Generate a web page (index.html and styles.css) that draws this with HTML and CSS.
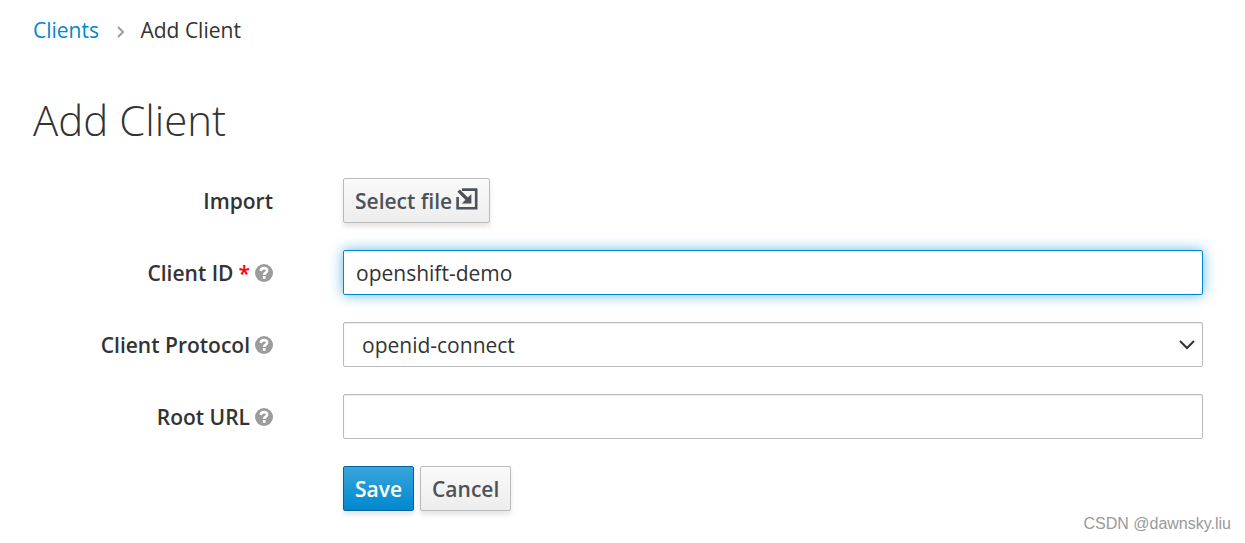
FILE: index.html
```html
<!DOCTYPE html>
<html lang="en">
<head>
    <meta charset="UTF-8">
    <meta name="viewport" content="width=device-width, initial-scale=1.0">
    <title>Add Client</title>
    <link rel="stylesheet" href="styles.css">
</head>
<body>
    <svg class="sprite" aria-hidden="true">
        <symbol id="help" viewBox="0 0 18 18">
            <circle cx="9" cy="9" r="9" fill="#9c9c9c"/>
            <path d="M5.7 7C6.2 3 12.2 3.4 12.2 6.5C12.2 8.6 9.2 8.6 9.2 10.9" fill="none" stroke="#fff" stroke-width="2.6"/>
            <path d="M7.9 12.1h2.7v2.7H7.9z" fill="#fff"/>
        </symbol>
    </svg>

    <main>
        <nav aria-label="Breadcrumb">
            <ol class="breadcrumb">
                <li><a href="#">Clients</a></li>
                <li>
                    <svg class="separator" viewBox="0 0 8 12" aria-hidden="true"><path d="M1 1l5 5-5 5"/></svg>
                    Add Client
                </li>
            </ol>
        </nav>

        <h1>Add Client</h1>

        <form class="client-form">
            <div class="form-group">
                <label for="import-button">Import</label>
                <button type="button" id="import-button" class="btn btn-default">
                    Select file
                    <svg class="import-icon" viewBox="0 0 22 22" aria-hidden="true">
                        <path d="M6 1.6H20.2V20.2H1.6V9" fill="none" stroke="#4d5258" stroke-width="2.6"/>
                        <path d="M2.6 2.6L12 12" fill="none" stroke="#4d5258" stroke-width="3.4"/>
                        <path d="M15.4 6v9.6H5.8z" fill="#4d5258"/>
                    </svg>
                </button>
            </div>

            <div class="form-group">
                <label for="clientId">Client ID <span class="required">*</span><svg class="help" aria-hidden="true"><use href="#help"/></svg></label>
                <input type="text" id="clientId" class="form-control active" value="openshift-demo">
            </div>

            <div class="form-group">
                <label for="protocol">Client Protocol<svg class="help" aria-hidden="true"><use href="#help"/></svg></label>
                <div class="select-wrap">
                    <select id="protocol" class="form-control">
                        <option selected>openid-connect</option>
                        <option>saml</option>
                    </select>
                    <svg class="arrow" viewBox="0 0 16 10" aria-hidden="true"><path d="M1 1l7 7 7-7"/></svg>
                </div>
            </div>

            <div class="form-group">
                <label for="rootUrl">Root URL<svg class="help" aria-hidden="true"><use href="#help"/></svg></label>
                <input type="text" id="rootUrl" class="form-control">
            </div>

            <div class="form-group">
                <div class="actions">
                    <button type="submit" class="btn btn-primary">Save</button>
                    <button type="button" class="btn btn-default">Cancel</button>
                </div>
            </div>
        </form>
    </main>

    <p class="watermark">CSDN @dawnsky.liu</p>
</body>
</html>
```

FILE: styles.css
```css
* {
    box-sizing: border-box;
}

body {
    margin: 0;
    min-height: 100vh;
    position: relative;
    background-color: #fff;
    color: #333;
    font-family: "Open Sans", "Noto Sans", sans-serif;
    font-size: 21px;
    line-height: 36px;
}

main {
    padding: 12px 42px 32px 33px;
}

.sprite {
    display: none;
}

.breadcrumb {
    display: flex;
    gap: 18px;
    margin: 0;
    padding: 0;
    list-style: none;
}

.breadcrumb a {
    color: #0088ce;
    text-decoration: none;
}

.separator {
    width: 8px;
    height: 12px;
    margin-right: 10px;
    fill: none;
    stroke: #9c9c9c;
    stroke-width: 2;
}

h1 {
    margin: 48px 0 34px;
    font-size: 42px;
    font-weight: 300;
    line-height: 48px;
}

.client-form {
    display: grid;
    gap: 27px;
}

.form-group {
    display: grid;
    grid-template-columns: 240px 1fr;
    column-gap: 70px;
    align-items: center;
}

.form-group label {
    display: flex;
    justify-content: flex-end;
    align-items: center;
    gap: 5px;
    font-weight: 600;
}

.required {
    color: #f00;
}

.help {
    width: 18px;
    height: 18px;
}

.form-control {
    width: 100%;
    height: 45px;
    padding: 0 12px;
    border: 1px solid #bbb;
    border-radius: 2px;
    background-color: #fff;
    box-shadow: inset 0 1px 1px rgba(3, 3, 3, 0.08);
    color: #333;
    font: inherit;
}

.form-control.active,
.form-control:focus {
    border-color: #0088ce;
    outline: 0;
    box-shadow: inset 0 1px 1px rgba(3, 3, 3, 0.08), 0 0 14px rgba(0, 136, 206, 0.6);
}

.select-wrap {
    display: flex;
    position: relative;
}

select.form-control {
    padding: 0 18px;
    appearance: none;
}

.arrow {
    position: absolute;
    top: 18px;
    right: 8px;
    width: 16px;
    height: 10px;
    fill: none;
    stroke: #333;
    stroke-width: 2;
    pointer-events: none;
}

.btn {
    display: flex;
    align-items: center;
    justify-self: start;
    gap: 4px;
    height: 45px;
    padding: 0 11px;
    border: 1px solid #bbb;
    border-radius: 2px;
    box-shadow: 0 4px 5px rgba(3, 3, 3, 0.1);
    font: inherit;
    font-weight: 600;
    cursor: pointer;
}

.btn-default {
    background-image: linear-gradient(#fafafa, #ededed);
    color: #4d5258;
}

.btn-primary {
    border-color: #00659c;
    background-image: linear-gradient(#39a5dc, #0088ce);
    color: #fff;
}

.import-icon {
    width: 22px;
    height: 22px;
    margin-bottom: 4px;
}

.actions {
    display: flex;
    gap: 6px;
    grid-column: 2;
}

.watermark {
    position: absolute;
    right: 14px;
    bottom: 8px;
    margin: 0;
    color: #999;
    font-family: "Liberation Sans", Arial, sans-serif;
    font-size: 16px;
    line-height: 22px;
}
```
